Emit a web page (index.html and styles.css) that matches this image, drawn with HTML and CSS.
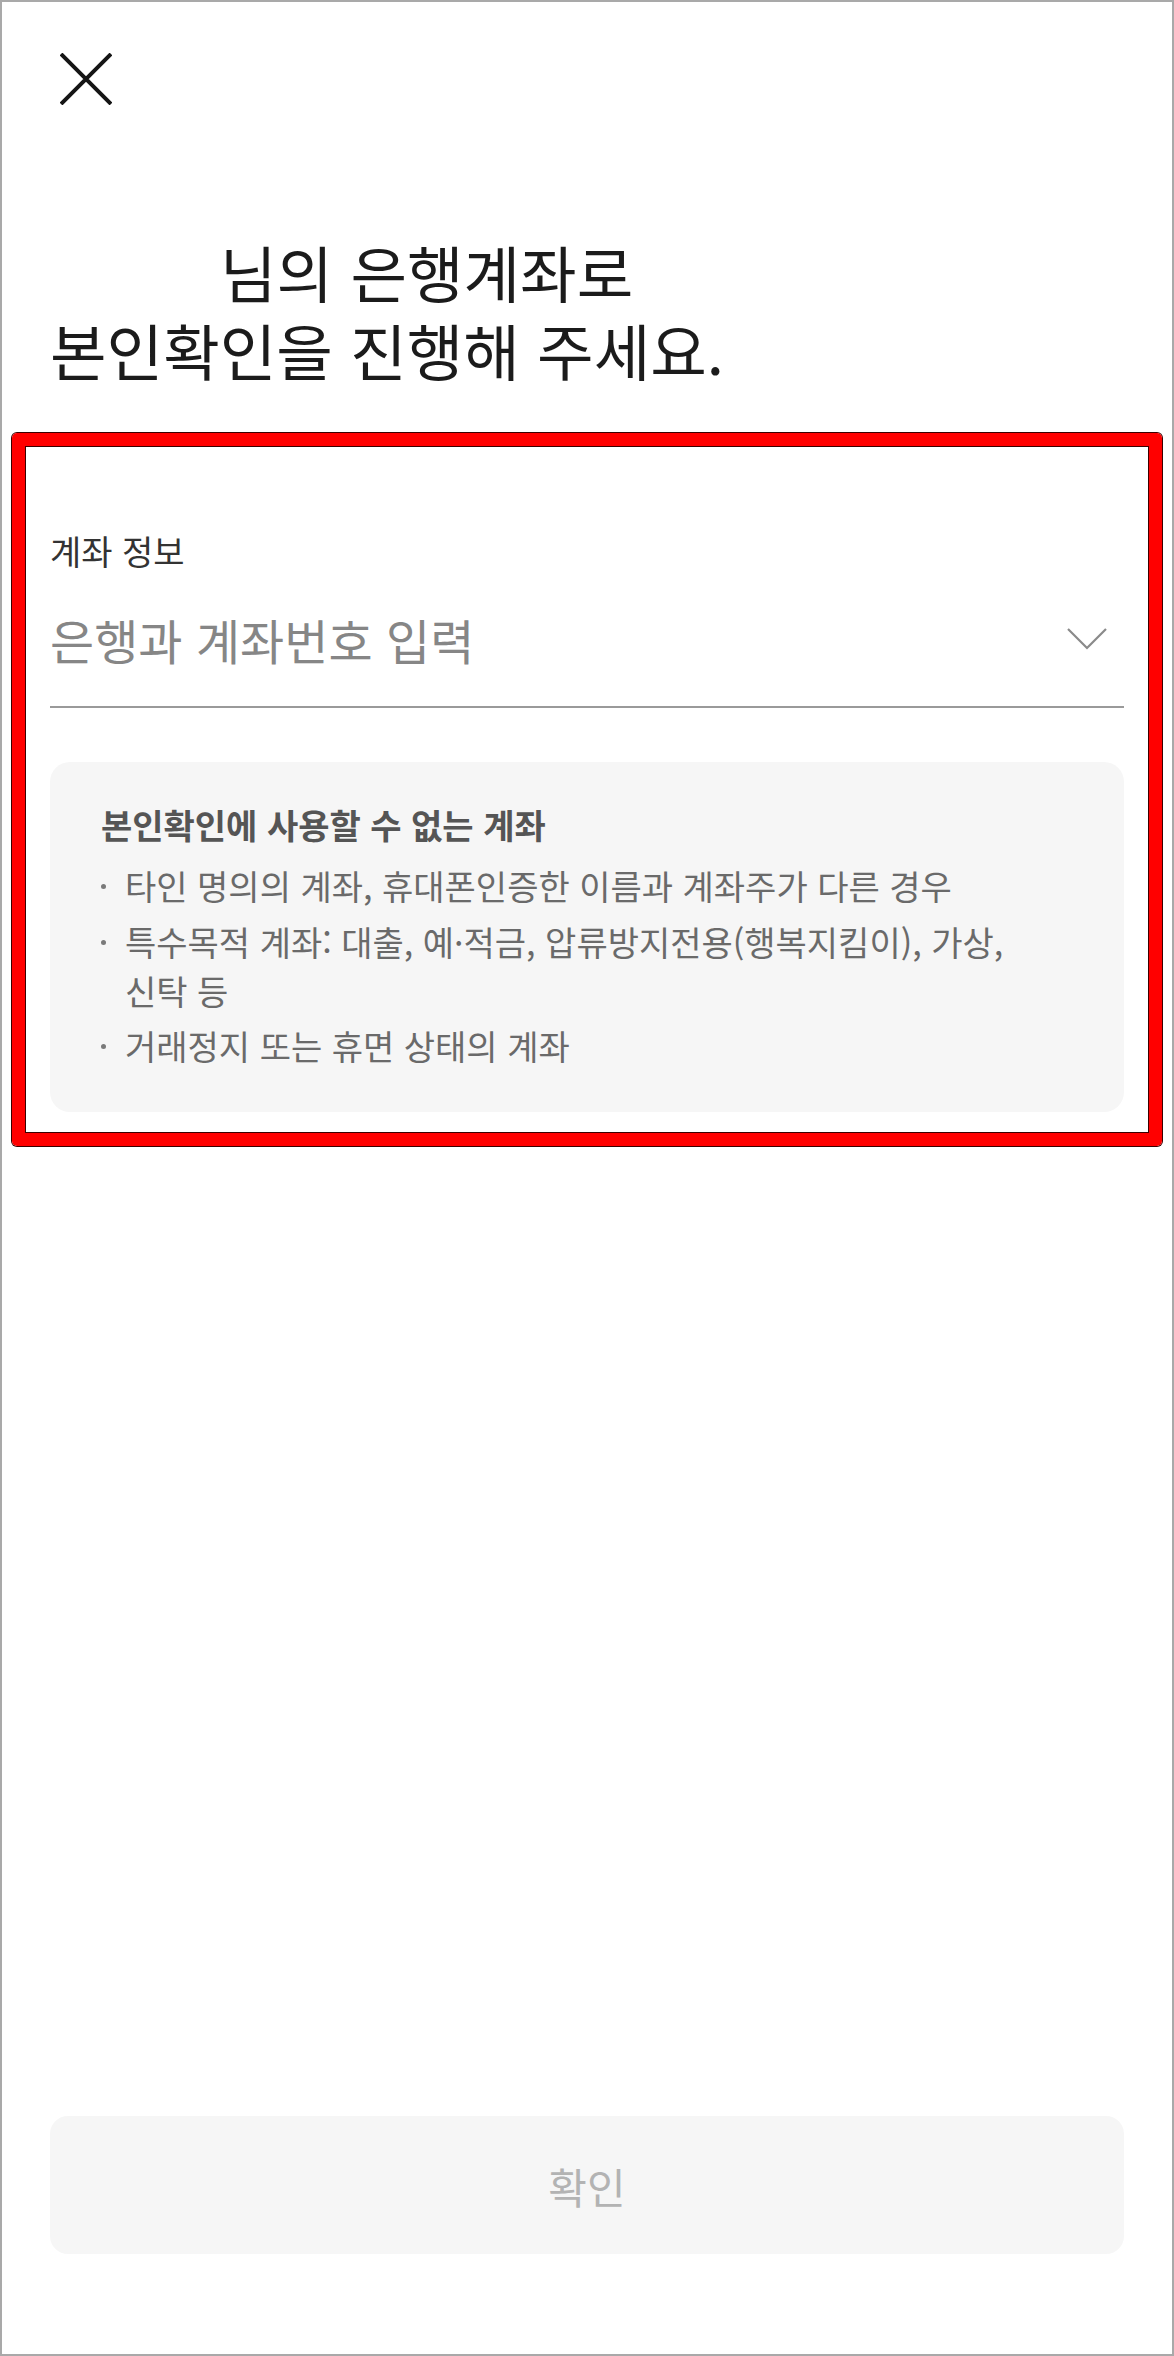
FILE: index.html
```html
<!DOCTYPE html>
<html lang="ko">
<head>
<meta charset="utf-8">
<title>본인확인</title>
<link rel="stylesheet" href="styles.css">
</head>
<body>
<div class="page">
  <header class="topbar">
    <button class="close" type="button" aria-label="닫기">
      <svg viewBox="0 0 52 52" width="52" height="52" aria-hidden="true">
        <path d="M1 1 L51 51 M51 1 L1 51" fill="none" stroke="#151515" stroke-width="4"/>
      </svg>
    </button>
  </header>

  <h1 class="title"><span class="title-line"><span class="name"></span>님의 은행계좌로</span><span class="title-line">본인확인을 진행해 주세요.</span></h1>

  <section class="account">
    <div class="label">계좌 정보</div>
    <div class="select">
      <span class="placeholder">은행과 계좌번호 입력</span>
      <svg class="chevron" viewBox="0 0 40 22" width="40" height="22" aria-hidden="true">
        <polyline points="1,1 20,20 39,1" fill="none" stroke="#8a8a8a" stroke-width="2.2"/>
      </svg>
    </div>
    <div class="notice">
      <p class="notice-title">본인확인에 사용할 수 없는 계좌</p>
      <ul class="notice-list">
        <li>타인 명의의 계좌, 휴대폰인증한 이름과 계좌주가 다른 경우</li>
        <li>특수목적 계좌: 대출, 예·적금, 압류방지전용(행복지킴이), 가상, 신탁 등</li>
        <li>거래정지 또는 휴면 상태의 계좌</li>
      </ul>
    </div>
  </section>

  <button class="confirm" type="button">확인</button>
</div>
</body>
</html>
```

FILE: styles.css
```css
* {
  box-sizing: border-box;
}

html,
body {
  margin: 0;
  padding: 0;
  background: #ffffff;
}

body {
  font-family: "Noto Sans CJK KR", "Noto Sans", sans-serif;
}

.page {
  width: 1174px;
  min-height: 2356px;
  border: 2px solid #a9a9a9;
  padding: 51px 48px 100px;
  display: flex;
  flex-direction: column;
}

.topbar {
  height: 52px;
  display: flex;
}

.close {
  margin-left: 10px;
  width: 52px;
  height: 52px;
  padding: 0;
  border: 0;
  background: none;
  display: block;
}

.close svg {
  display: block;
}

.title {
  margin: 128px 0 0;
  font-size: 61.5px;
  line-height: 78px;
  font-weight: 400;
  color: #1b1b1b;
}

.title-line {
  display: block;
  height: 78px;
}

.name {
  display: inline-block;
  width: 170px;
}

.account {
  margin: 44px -38px 0;
  border: 13px solid #ff0000;
  border-radius: 5px;
  box-shadow: 0 0 0 1px #3a0000, inset 0 0 0 1px #3a0000;
  padding: 85px 25px 21px;
}

.label {
  font-size: 34px;
  line-height: 40px;
  color: #333333;
}

.select {
  margin-top: 28px;
  height: 109px;
  padding-bottom: 27px;
  border-bottom: 2px solid #9a9a9a;
  display: flex;
  align-items: center;
  justify-content: space-between;
}

.placeholder {
  font-size: 48px;
  line-height: 80px;
  color: #868686;
}

.chevron {
  display: block;
  margin-right: 17px;
  flex: none;
}

.notice {
  margin-top: 54px;
  background: #f6f6f6;
  border-radius: 20px;
  padding: 38px 70px 42px 51px;
}

.notice-title {
  margin: 0;
  font-size: 34px;
  line-height: 49px;
  font-weight: 700;
  color: #555555;
}

.notice-list {
  list-style: none;
  margin: 12px 0 0;
  padding: 0;
  display: flex;
  flex-direction: column;
  gap: 6.5px;
}

.notice-list li {
  display: flex;
  font-size: 34px;
  line-height: 49px;
  color: #6a6a6a;
  word-break: keep-all;
}

.notice-list li::before {
  content: "";
  flex: none;
  width: 5px;
  height: 5px;
  border-radius: 50%;
  background: #7a7a7a;
  margin: 23px 19px 0 0;
}

.confirm {
  margin-top: auto;
  width: 100%;
  height: 138px;
  border: 0;
  border-radius: 18px;
  background: #f6f6f6;
  color: #b3b3b3;
  font-family: inherit;
  font-size: 42px;
  padding: 0;
}
```
